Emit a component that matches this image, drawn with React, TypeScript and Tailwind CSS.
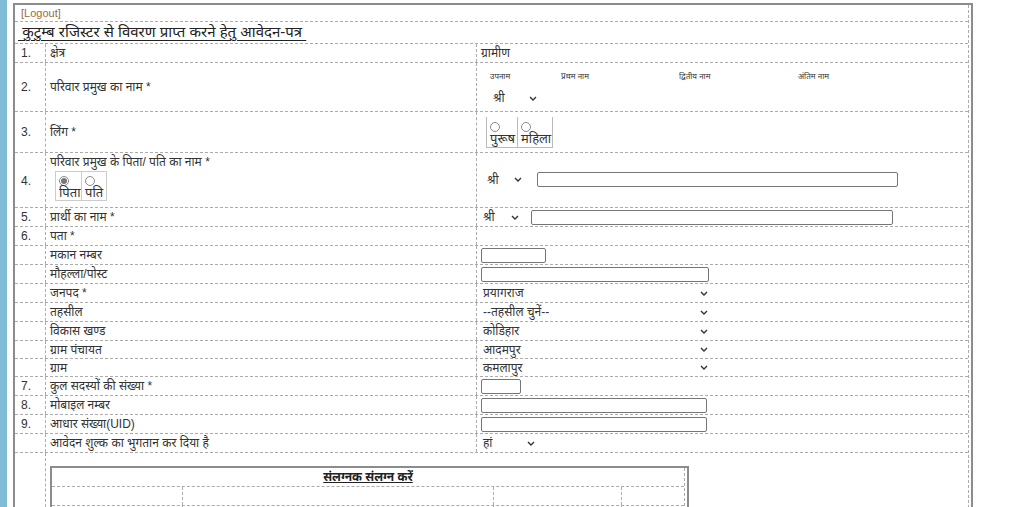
import React from "react";

const F = { fontFamily: '"Liberation Sans", "Noto Sans", Arial, sans-serif' };

function Chevron() {
  return (
    <svg width="8" height="5" viewBox="0 0 8 5" className="shrink-0">
      <path d="M1 1 L4 4 L7 1" fill="none" stroke="#333" strokeWidth="1.4" />
    </svg>
  );
}

function Sel({ text, w }: { text: string; w: string }) {
  return (
    <div className={`flex items-center justify-between pr-[2px] ${w}`}>
      <span>{text}</span>
      <Chevron />
    </div>
  );
}

function Inp({ w }: { w: string }) {
  return <div className={`h-[15px] border border-[#767676] rounded-[2px] bg-white ${w}`} />;
}

function Radio({ checked }: { checked?: boolean }) {
  return (
    <div className="w-[10px] h-[10px] rounded-full border border-[#8a8a8a] bg-white flex items-center justify-center">
      {checked && <div className="w-[6px] h-[6px] rounded-full bg-[#777]" />}
    </div>
  );
}

function Row({
  num,
  label,
  children,
  h = "h-[19px]",
}: {
  num?: string;
  label?: React.ReactNode;
  children?: React.ReactNode;
  h?: string;
}) {
  return (
    <div className={`flex border-b border-dashed border-[#ababab] ${h}`}>
      <div className="w-[31px] shrink-0 border-r border-dashed border-[#ababab] pl-[6px] flex items-center">{num}</div>
      <div className="w-[431px] shrink-0 border-r border-dashed border-[#ababab] pl-[4px] flex items-center">
        {label}
      </div>
      <div className="flex-1 pl-[4px] flex items-center">{children}</div>
    </div>
  );
}

export default function App() {
  return (
    <div className="relative w-[1024px] h-[507px] overflow-hidden bg-white flex text-[12px] text-[#333]" style={F}>
      <div className="w-[7px] shrink-0 bg-[#7fbcd6]" />
      <div className="ml-[6px] mt-[3px] w-[960px] shrink-0 self-start border-2 border-[#8c8c8c]">
        <div className="mr-[2px] border-r border-dashed border-[#ababab]">
          <div className="h-[17px] border-b border-dashed border-[#ababab] pl-[6px] flex items-center text-[11px] text-[#9a6a3a]">
            [Logout]
          </div>
          <div className="h-[22px] border-b border-dashed border-[#ababab] pl-[3px] flex items-center text-[15px] text-[#222]">
            <span className="underline underline-offset-[3px]">&nbsp;कुटुम्ब रजिस्टर से विवरण प्राप्त करने हेतु आवेदन-पत्र&nbsp;</span>
          </div>
          <Row num="1." label="क्षेत्र">ग्रामीण</Row>
          <Row num="2." label="परिवार प्रमुख का नाम *" h="h-[49px]">
            <div className="flex flex-col self-stretch pt-[7px] pl-[9px]">
              <div className="flex text-[8px] h-[14px] items-center">
                <div className="w-[71px]">उपनाम</div>
                <div className="w-[118px]">प्रथम नाम</div>
                <div className="w-[119px]">द्वितीय नाम</div>
                <div>अंतिम नाम</div>
              </div>
              <div className="mt-[5px] pl-[3px]">
                <Sel text="श्री" w="w-[46px]" />
              </div>
            </div>
          </Row>
          <Row num="3." label="लिंग *" h="h-[41px]">
            <div className="flex ml-[5px] text-[13px]">
              <div className="w-[31px] border-b border-l border-[#bbb] flex flex-col pl-[3px] pt-[5px] h-[31px]">
                <Radio />
                <span className="leading-[14px]">पुरूष</span>
              </div>
              <div className="w-[36px] border-b border-l border-r border-[#bbb] flex flex-col pl-[3px] pt-[5px] h-[31px]">
                <Radio />
                <span className="leading-[14px]">महिला</span>
              </div>
            </div>
          </Row>
          <div className="flex border-b border-dashed border-[#ababab] h-[55px]">
            <div className="w-[31px] shrink-0 border-r border-dashed border-[#ababab] pl-[6px] flex items-center pt-[2px]">4.</div>
            <div className="w-[431px] shrink-0 border-r border-dashed border-[#ababab] pl-[4px] flex flex-col">
              <div className="h-[17px] flex items-center">परिवार प्रमुख के पिता/ पति का नाम *</div>
              <div className="flex ml-[5px] mt-[1px] text-[13px]">
                <div className="w-[26px] border-b border-l border-t border-[#ccc] flex flex-col pl-[3px] pt-[4px] h-[30px]">
                  <Radio checked />
                  <span className="leading-[14px]">पिता</span>
                </div>
                <div className="w-[26px] border border-[#ccc] flex flex-col pl-[3px] pt-[4px] h-[30px]">
                  <Radio />
                  <span className="leading-[14px]">पति</span>
                </div>
              </div>
            </div>
            <div className="flex-1 pl-[10px] flex items-center gap-[13px] pb-[1px]">
              <Sel text="श्री" w="w-[37px]" />
              <Inp w="w-[361px]" />
            </div>
          </div>
          <Row num="5." label="प्रार्थी का नाम *">
            <div className="flex items-center gap-[10px] pl-[2px]">
              <Sel text="श्री" w="w-[38px]" />
              <Inp w="w-[362px]" />
            </div>
          </Row>
          <Row num="6." label="पता *" />
          <Row label="मकान नम्बर">
            <Inp w="w-[65px]" />
          </Row>
          <Row label="मौहल्ला/पोस्ट">
            <Inp w="w-[228px]" />
          </Row>
          <Row label="जनपद *">
            <div className="pl-[2px]"><Sel text="प्रयागराज" w="w-[227px]" /></div>
          </Row>
          <Row label="तहसील">
            <div className="pl-[2px]"><Sel text="--तहसील चुनें--" w="w-[227px]" /></div>
          </Row>
          <Row label="विकास खण्ड">
            <div className="pl-[2px]"><Sel text="कोडिहार" w="w-[227px]" /></div>
          </Row>
          <Row label="ग्राम पंचायत" h="h-[18px]">
            <div className="pl-[2px]"><Sel text="आदमपुर" w="w-[227px]" /></div>
          </Row>
          <Row label="ग्राम" h="h-[18px]">
            <div className="pl-[2px]"><Sel text="कमलापुर" w="w-[227px]" /></div>
          </Row>
          <Row num="7." label="कुल सदस्यों की संख्या *">
            <Inp w="w-[40px]" />
          </Row>
          <Row num="8." label="मोबाइल नम्बर">
            <Inp w="w-[226px]" />
          </Row>
          <Row num="9." label="आधार संख्या(UID)">
            <Inp w="w-[226px]" />
          </Row>
          <Row label="आवेदन शुल्क का भुगतान कर दिया है">
            <div className="pl-[2px]"><Sel text="हां" w="w-[54px]" /></div>
          </Row>
          <div className="flex h-[120px]">
            <div className="w-[31px] shrink-0 border-r border-dashed border-[#ababab]" />
            <div className="flex-1 pl-[4px] pt-[13px]">
              <div className="w-[639px] border-2 border-[#8c8c8c]">
                <div className="mr-[2px] border-r border-dashed border-[#ababab]">
                  <div className="h-[19px] border-b border-dashed border-[#ababab] flex items-center justify-center">
                    <span className="font-bold underline text-[12px] text-[#222]">संलग्नक संलग्न करें</span>
                  </div>
                  <div className="h-[19px] border-b border-dashed border-[#ababab] flex">
                    <div className="w-[131px] border-r border-dashed border-[#ababab]" />
                    <div className="w-[311px] border-r border-dashed border-[#ababab]" />
                    <div className="w-[128px] border-r border-dashed border-[#ababab]" />
                    <div className="flex-1" />
                  </div>
                  <div className="h-[30px] flex">
                    <div className="w-[131px] border-r border-dashed border-[#ababab]" />
                    <div className="w-[311px] border-r border-dashed border-[#ababab] pl-[3px] pt-[1px]">
                      <Inp w="w-[270px]" />
                    </div>
                    <div className="w-[128px] border-r border-dashed border-[#ababab]" />
                    <div className="flex-1" />
                  </div>
                </div>
              </div>
            </div>
          </div>
        </div>
      </div>
    </div>
  );
}
